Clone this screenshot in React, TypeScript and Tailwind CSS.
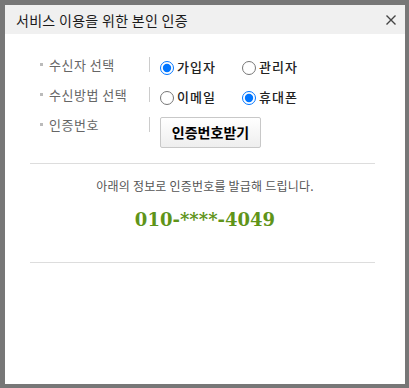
import { useState } from "react";

const KR = { fontFamily: '"Noto Sans CJK KR", "Noto Sans", sans-serif' };

function Radio({ name, label, checked, onChange }: { name: string; label: string; checked: boolean; onChange: () => void }) {
  return (
    <label className="flex items-center gap-[3px] cursor-pointer">
      <input
        type="radio"
        name={name}
        checked={checked}
        onChange={onChange}
        className="m-0 w-[14px] h-[14px] accent-[#0075ff]"
      />
      <span className="text-[13px] font-medium tracking-[1px] text-[#222] leading-none -mt-[3px]">{label}</span>
    </label>
  );
}

function Row({ label, children }: { label: string; children: React.ReactNode }) {
  return (
    <div className="flex items-start h-[30px]">
      <div className="w-[109px] h-[15px] flex items-center gap-[6px]">
        <span className="w-[3px] h-[3px] bg-[#bbb]" />
        <span className="text-[13px] tracking-[0.5px] text-[#666] leading-none">{label}</span>
      </div>
      <span className="w-px h-[15px] bg-[#ccc]" />
      <div className="ml-[10px] flex items-center">{children}</div>
    </div>
  );
}

export default function App() {
  const [target, setTarget] = useState("member");
  const [method, setMethod] = useState("phone");

  return (
    <div className="w-[409px] h-[388px] bg-[#777] pt-[5px] pl-[5px] pr-[4px] pb-[4px]" style={KR}>
      <div className="h-full bg-white flex flex-col">
        {/* 헤더 */}
        <div className="h-[29px] bg-[#f0f0f0] flex items-center justify-between pl-[11px] pr-[9px]">
          <span className="text-[14px] tracking-[0.3px] text-[#1a1a1a] mt-[1px]">서비스 이용을 위한 본인 인증</span>
          <svg width="10" height="10" viewBox="0 0 10 10">
            <path d="M0.5 0.5L9.5 9.5M9.5 0.5L0.5 9.5" stroke="#444" strokeWidth="1.4" />
          </svg>
        </div>

        {/* 선택 영역 */}
        <div className="pl-[35px] pt-[23px] flex flex-col">
          <Row label="수신자 선택">
            <div className="mt-[4px] flex items-center">
              <div className="w-[82px]">
                <Radio name="target" label="가입자" checked={target === "member"} onChange={() => setTarget("member")} />
              </div>
              <Radio name="target" label="관리자" checked={target === "admin"} onChange={() => setTarget("admin")} />
            </div>
          </Row>
          <Row label="수신방법 선택">
            <div className="mt-[4px] flex items-center">
              <div className="w-[82px]">
                <Radio name="method" label="이메일" checked={method === "email"} onChange={() => setMethod("email")} />
              </div>
              <Radio name="method" label="휴대폰" checked={method === "phone"} onChange={() => setMethod("phone")} />
            </div>
          </Row>
          <div className="h-[31px]">
            <Row label="인증번호">
              <button className="w-[101px] h-[31px] border border-[#c8c8c8] rounded-[2px] bg-gradient-to-b from-white to-[#eee] text-[14px] font-bold text-black">
                인증번호받기
              </button>
            </Row>
          </div>
        </div>

        <div className="ml-[25px] mr-[30px] mt-[15px] border-t border-[#ddd]" />

        <div className="flex flex-col items-center">
          <p className="mt-[13px] text-[12px] tracking-[0.2px] text-[#555]">아래의 정보로 인증번호를 발급해 드립니다.</p>
          <p
            className="mt-[16px] text-[18px] font-bold text-[#5f9419] leading-none"
            style={{ fontFamily: '"DejaVu Serif", serif' }}
          >
            010-****-4049
          </p>
        </div>

        <div className="ml-[25px] mr-[30px] mt-[33px] border-t border-[#ddd]" />
      </div>
    </div>
  );
}
